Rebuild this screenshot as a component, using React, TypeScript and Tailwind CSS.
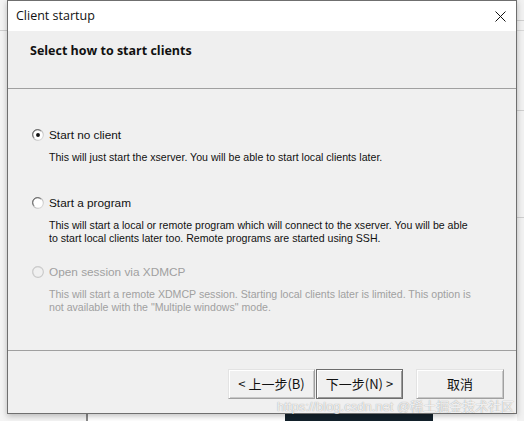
import React from "react";

function Radio({ checked, disabled }: { checked?: boolean; disabled?: boolean }) {
  return (
    <svg width="12" height="12" viewBox="0 0 13 13" className="shrink-0">
      <defs>
        <linearGradient id="rg" x1="0" y1="0" x2="1" y2="1">
          <stop offset="0" stopColor="#8a8a8a" />
          <stop offset="1" stopColor="#e6e6e6" />
        </linearGradient>
      </defs>
      <circle cx="6.5" cy="6.5" r="5.8" fill={disabled ? "#f0f0f0" : "#ffffff"} stroke={disabled ? "#c8c8c8" : "url(#rg)"} strokeWidth="1.2" />
      <path d="M2.2 9.5 A5 5 0 0 1 9.5 2.2" fill="none" stroke={disabled ? "#d0d0d0" : "#5a5a5a"} strokeWidth="0.9" />
      {checked && <circle cx="6.5" cy="6.5" r="2.1" fill="#111" />}
    </svg>
  );
}

function Option({
  label,
  desc,
  checked,
  disabled,
  className,
}: {
  label: string;
  desc: string[];
  checked?: boolean;
  disabled?: boolean;
  className?: string;
}) {
  const color = disabled ? "text-[#a0a0a0]" : "text-[#111]";
  return (
    <div className={`flex flex-col ${color} ${className ?? ""}`}>
      <div className="flex items-center h-[14px]">
        <div className="w-[17px] flex items-center">
          <Radio checked={checked} disabled={disabled} />
        </div>
        <span className="text-[11.8px] leading-[14px]">{label}</span>
      </div>
      <div className="pl-[17px] mt-[9px] text-[10.6px] leading-[13px]">
        {desc.map((d, i) => (
          <div key={i}>{d}</div>
        ))}
      </div>
    </div>
  );
}

function Button({ children, def }: { children: React.ReactNode; def?: boolean }) {
  return (
    <div
      className={`h-[30px] flex items-center justify-center bg-[#f0f0f0] text-[13px] text-[#111] border ${
        def
          ? "border-[#6d6d6d] shadow-[inset_1px_1px_0_#fff,inset_-1px_-1px_0_#9a9a9a]"
          : "border-t-[#e3e3e3] border-l-[#e3e3e3] border-r-[#a0a0a0] border-b-[#a0a0a0] shadow-[inset_1px_1px_0_#fff,inset_-1px_-1px_0_#c8c8c8]"
      }`}
      style={{ fontFamily: '"Noto Sans CJK SC", "Liberation Sans", sans-serif' }}
    >
      {children}
    </div>
  );
}

export default function App() {
  return (
    <div
      className="relative w-[524px] h-[421px] overflow-hidden bg-[#f4f4f4]"
      style={{ fontFamily: '"Liberation Sans", Arial, sans-serif' }}
    >
      {/* background bits */}
      <div className="absolute left-0 top-[30px] w-[8px] h-px bg-[#cfcfcf]" />
      <div className="absolute left-[86px] top-[405px] w-[2px] h-[16px] bg-[#8a8a8a]" />
      <div className="absolute left-[88px] top-[413px] right-0 h-[8px] bg-white" />
      <div className="absolute left-[285px] top-[412px] w-[148px] h-[9px] bg-[#13212b]" />
      <div className="absolute left-[517px] top-[0px] w-[7px] h-[421px] bg-[#f2f2f2]" />
      <div className="absolute left-[517px] top-[20px] w-[7px] h-px bg-[#cfcfcf]" />
      <div className="absolute left-[517px] top-[30px] w-[7px] h-px bg-[#d8d8d8]" />
      <div className="absolute left-[517px] top-[110px] w-[7px] h-px bg-[#cfcfcf]" />
      <div className="absolute left-[517px] top-[217px] w-[7px] h-px bg-[#cfcfcf]" />

      {/* dialog window */}
      <div className="absolute left-[7px] top-0 w-[510px] h-[414px] border border-[#6f6f6f] bg-[#f0f0f0] flex flex-col shadow-[0_2px_6px_rgba(0,0,0,0.25)]">
        {/* title bar */}
        <div className="h-[30px] bg-white flex items-center justify-between pl-[8px] pr-[10px] shrink-0">
          <span className="text-[12.5px] text-[#111]" style={{ fontFamily: '"Open Sans", "Noto Sans", sans-serif' }}>
            Client startup
          </span>
          <svg width="11" height="11" viewBox="0 0 11 11">
            <path d="M0.5 0.5 L10.5 10.5 M10.5 0.5 L0.5 10.5" stroke="#111" strokeWidth="1" />
          </svg>
        </div>
        {/* header */}
        <div className="h-[58px] shrink-0 bg-[#efefef] border-b border-[#a0a0a0] pl-[22px] pt-[7px]">
          <span
            className="text-[12.5px] font-bold text-[#111]"
            style={{ fontFamily: '"Open Sans", "Noto Sans", sans-serif' }}
          >
            Select how to start clients
          </span>
        </div>
        {/* body */}
        <div className="flex-1 flex flex-col pl-[24px] pt-[39px] border-b border-[#a0a0a0]">
          <Option
            checked
            label="Start no client"
            desc={["This will just start the xserver. You will be able to start local clients later."]}
          />
          <Option
            className="mt-[32px]"
            label="Start a program"
            desc={[
              "This will start a local or remote program which will connect to the xserver. You will be able",
              "to start local clients later too. Remote programs are started using SSH.",
            ]}
          />
          <Option
            className="mt-[20px]"
            disabled
            label="Open session via XDMCP"
            desc={[
              "This will start a remote XDMCP session. Starting local clients later is limited. This option is",
              'not available with the "Multiple windows" mode.',
            ]}
          />
        </div>
        {/* footer */}
        <div className="h-[62px] shrink-0 flex items-start pt-[18px] pl-[220px]">
          <div className="w-[87px]">
            <Button>&lt; 上一步(B)</Button>
          </div>
          <div className="w-[87px] ml-[1px]">
            <Button def>下一步(N) &gt;</Button>
          </div>
          <div className="w-[88px] ml-[13px]">
            <Button>取消</Button>
          </div>
        </div>
      </div>

      {/* watermark */}
      <div
        className="absolute left-[277px] top-[397px] text-[13px] text-white/85 whitespace-nowrap [text-shadow:0_0_1px_rgba(0,0,0,0.45)]"
        style={{ fontFamily: '"Liberation Sans", "Noto Sans CJK SC", sans-serif' }}
      >
        https://blog.csdn.net @稀土掘金技术社区
      </div>
    </div>
  );
}
